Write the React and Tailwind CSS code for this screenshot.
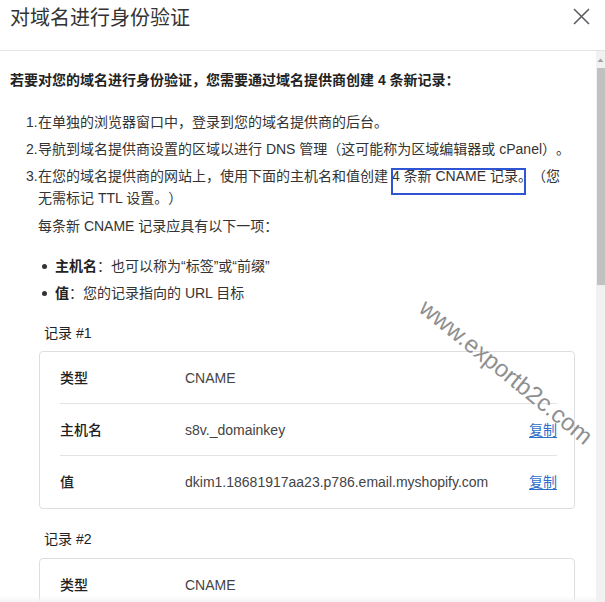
import React from "react";

const FONT = {
  fontFamily:
    '"Liberation Sans", "Noto Sans CJK SC", "Noto Sans", sans-serif',
};

const Q = ({ children }) => (
  <span style={{ fontFamily: '"Liberation Sans", sans-serif' }}>{children}</span>
);

function RecordCard({ host, value }) {
  return (
    <div className="ml-[29px] border border-[#dcdee0] rounded-[4px] bg-white pl-5 pr-[17px]">
      <div className="h-[52px] flex items-center border-b border-[#e1e3e5] text-[14px]">
        <div className="w-[125px] text-[#222] font-medium">类型</div>
        <div className="flex-1 text-[#444]">CNAME</div>
      </div>
      {host !== undefined && (
        <>
          <div className="h-[52px] flex items-center border-b border-[#e1e3e5] text-[14px]">
            <div className="w-[125px] text-[#222] font-medium">主机名</div>
            <div className="flex-1 text-[#444]">{host}</div>
            <a className="text-[#2c6ecb] underline underline-offset-2">复制</a>
          </div>
          <div className="h-[52px] flex items-center text-[14px]">
            <div className="w-[125px] text-[#222] font-medium">值</div>
            <div className="flex-1 text-[#444]">{value}</div>
            <a className="text-[#2c6ecb] underline underline-offset-2">复制</a>
          </div>
        </>
      )}
    </div>
  );
}

export default function App() {
  return (
    <div
      className="relative w-[605px] h-[602px] bg-white overflow-hidden text-[#333] [text-spacing-trim:space-all]"
      style={FONT}
    >
      {/* Header */}
      <div className="h-[51px] border-b border-[#e4e4e4] flex items-start justify-between pl-[10px] pr-[15px] pt-[3px]">
        <h2
          className="text-[20px] leading-[28px] text-[#333] font-normal"
          style={{ fontFamily: '"Noto Sans CJK SC", sans-serif' }}
        >
          对域名进行身份验证
        </h2>
        <svg
          className="mt-[5px]"
          width="17"
          height="17"
          viewBox="0 0 17 17"
          fill="none"
          stroke="#5c5f62"
          strokeWidth="1.6"
        >
          <path d="M1 1L16 16M16 1L1 16" />
        </svg>
      </div>

      {/* Body */}
      <div className="flex h-[551px]">
        <div className="flex-1 overflow-hidden pl-[10px] pr-[21px] pt-[18px] text-[14px] leading-[22px]">
          <p className="font-bold text-[#222]">
            若要对您的域名进行身份验证，您需要通过域名提供商创建 4 条新记录：
          </p>

          <ol className="mt-[20px] pl-[16px]">
            <li className="flex">
              <span className="w-[12px] shrink-0">1.</span>
              <span>在单独的浏览器窗口中，登录到您的域名提供商的后台。</span>
            </li>
            <li className="flex mt-[5px]">
              <span className="w-[12px] shrink-0">2.</span>
              <span className="whitespace-nowrap">
                导航到域名提供商设置的区域以进行 DNS 管理（这可能称为区域编辑器或 cPanel）。
              </span>
            </li>
            <li className="flex mt-[5px]">
              <span className="w-[12px] shrink-0">3.</span>
              <span className="whitespace-nowrap">
                在您的域名提供商的网站上，使用下面的主机名和值创建 4 条新 CNAME 记录。（您
                <br />
                无需标记 TTL 设置。）
              </span>
            </li>
          </ol>

          <p className="mt-[6px] pl-[28px]">每条新 CNAME 记录应具有以下一项：</p>

          <ul className="mt-[18px] pl-[32px]">
            <li className="flex items-center">
              <span className="w-[13px] shrink-0 flex">
                <span className="w-[5px] h-[5px] rounded-full bg-[#333]" />
              </span>
              <span>
                <b className="font-bold text-[#222]">主机名</b>：也可以称为<Q>“</Q>标签<Q>”</Q>或<Q>“</Q>前缀<Q>”</Q>
              </span>
            </li>
            <li className="flex items-center mt-[5px]">
              <span className="w-[13px] shrink-0 flex">
                <span className="w-[5px] h-[5px] rounded-full bg-[#333]" />
              </span>
              <span>
                <b className="font-bold text-[#222]">值</b>：您的记录指向的 URL 目标
              </span>
            </li>
          </ul>

          <p className="mt-[18px] pl-[34px] text-[#222]">记录 #1</p>
          <div className="mt-[7px]">
            <RecordCard
              host="s8v._domainkey"
              value="dkim1.18681917aa23.p786.email.myshopify.com"
            />
          </div>

          <p className="mt-[19px] pl-[34px] text-[#222]">记录 #2</p>
          <div className="mt-[8px]">
            <RecordCard />
          </div>
        </div>

        {/* Scrollbar */}
        <div className="w-[9px] bg-[#f1f1f1] flex flex-col items-center">
          <svg width="7" height="6" viewBox="0 0 7 6" className="mt-[6px]">
            <path d="M0.5 5L3.5 1.5L6.5 5Z" fill="#a3a3a3" />
          </svg>
          <div className="mt-[5px] w-[8px] h-[217px] bg-[#c1c1c1]" />
        </div>
      </div>

      {/* Annotation box */}
      <div className="absolute left-[391px] top-[168px] w-[135px] h-[27px] border-2 border-[#2f55d4] pointer-events-none" />

      {/* Watermark */}
      <div
        className="absolute left-[396px] top-[357px] w-[220px] h-[30px] text-center text-[24px] leading-[30px] text-[#8f8f8f] rotate-[39deg] pointer-events-none whitespace-nowrap"
        style={{ fontFamily: '"Liberation Sans", Arial, sans-serif' }}
      >
        www.exportb2c.com
      </div>

      {/* Bottom fade */}
      <div className="absolute left-0 right-[9px] bottom-0 h-[6px] bg-gradient-to-b from-transparent to-[#f3f3f3] pointer-events-none" />
    </div>
  );
}
